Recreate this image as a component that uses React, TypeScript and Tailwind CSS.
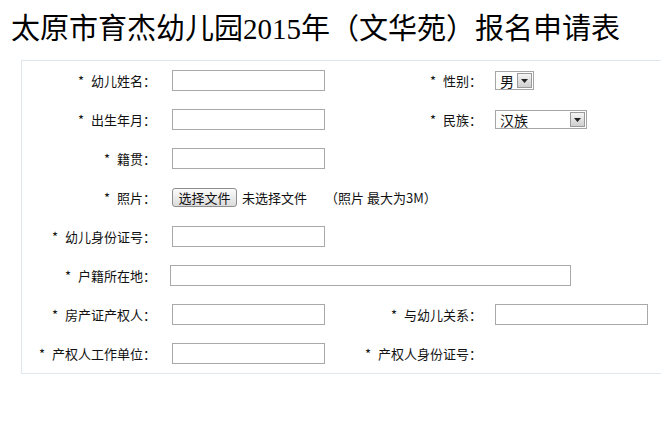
import type { ReactNode } from 'react';

const cjk = '"Noto Sans CJK SC", "Noto Sans", sans-serif';

function TextBox({ wide = false }: { wide?: boolean }) {
  return (
    <div
      className={
        wide
          ? 'h-[21px] w-[401px] border border-[#a9a9a9] bg-white'
          : 'h-[21px] w-[153px] border border-[#a9a9a9] bg-white'
      }
    />
  );
}

function Select({ value, width }: { value: string; width: string }) {
  return (
    <div
      className={`flex h-[19px] items-center justify-between border border-[#a5a5a5] bg-white pl-[4px] pr-[1px] ${width}`}
    >
      <span className="text-[14px] leading-none text-[#111]">{value}</span>
      <span className="flex h-[15px] w-[15px] items-center justify-center border border-[#9a9a9a] bg-gradient-to-b from-[#f4f4f4] to-[#cfcfcf]">
        <svg width="7" height="4" viewBox="0 0 7 4">
          <path d="M0 0h7L3.5 4z" fill="#222" />
        </svg>
      </span>
    </div>
  );
}

function Label({ children, w }: { children: ReactNode; w: string }) {
  return (
    <div className={`shrink-0 text-right text-[13px] leading-none text-[#111] ${w}`}>
      <span className="inline-block w-[13px] text-left">*</span>
      {children}：
    </div>
  );
}

function Row({ children }: { children: ReactNode }) {
  return <div className="flex h-[39px] items-center">{children}</div>;
}

export default function App() {
  return (
    <div className="h-[437px] w-[661px] overflow-hidden bg-white" style={{ fontFamily: cjk }}>
      <h1
        className="pl-[11px] pt-[12px] text-[29px] font-normal leading-[34px] text-black"
        style={{ fontFamily: '"Liberation Serif", "Noto Sans CJK SC", serif' }}
      >
        太原市育杰幼儿园2015年（文华苑）报名申请表
      </h1>

      <div className="ml-[21px] mt-[14px] w-[700px] border border-[#dfe7ec]">
        <Row>
          <Label w="w-[134px]">幼儿姓名</Label>
          <div className="ml-[16px] w-[167px]">
            <TextBox />
          </div>
          <Label w="w-[143px]">性别</Label>
          <div className="ml-[13px]">
            <Select value="男" width="w-[39px]" />
          </div>
        </Row>

        <Row>
          <Label w="w-[134px]">出生年月</Label>
          <div className="ml-[16px] w-[167px]">
            <TextBox />
          </div>
          <Label w="w-[143px]">民族</Label>
          <div className="ml-[13px]">
            <Select value="汉族" width="w-[92px]" />
          </div>
        </Row>

        <Row>
          <Label w="w-[134px]">籍贯</Label>
          <div className="ml-[16px]">
            <TextBox />
          </div>
        </Row>

        <Row>
          <Label w="w-[134px]">照片</Label>
          <div className="ml-[16px] flex items-center text-[13px] leading-none text-[#111]">
            <button className="flex h-[19px] w-[65px] items-center justify-center rounded-[3px] border border-[#8e8e8e] bg-gradient-to-b from-[#fbfbfb] to-[#dcdcdc] text-[13px] leading-none text-[#111]">
              选择文件
            </button>
            <span className="ml-[5px]">未选择文件</span>
            <span className="ml-[18px]">（照片 最大为3M）</span>
          </div>
        </Row>

        <Row>
          <Label w="w-[134px]">幼儿身份证号</Label>
          <div className="ml-[16px]">
            <TextBox />
          </div>
        </Row>

        <Row>
          <Label w="w-[134px]">户籍所在地</Label>
          <div className="ml-[14px]">
            <TextBox wide />
          </div>
        </Row>

        <Row>
          <Label w="w-[134px]">房产证产权人</Label>
          <div className="ml-[16px] w-[167px]">
            <TextBox />
          </div>
          <Label w="w-[143px]">与幼儿关系</Label>
          <div className="ml-[13px]">
            <TextBox />
          </div>
        </Row>

        <Row>
          <Label w="w-[134px]">产权人工作单位</Label>
          <div className="ml-[16px] w-[167px]">
            <TextBox />
          </div>
          <Label w="w-[143px]">产权人身份证号</Label>
        </Row>
      </div>
    </div>
  );
}
